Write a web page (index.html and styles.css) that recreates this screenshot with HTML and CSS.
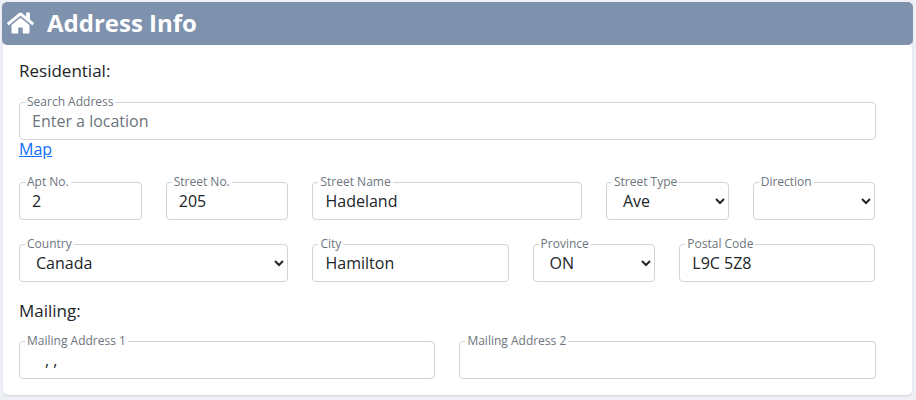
FILE: index.html
```html
<!DOCTYPE html>
<html lang="en">
<head>
<meta charset="utf-8">
<title>Address Info</title>
<link rel="stylesheet" href="styles.css">
</head>
<body>
<section class="panel">
  <header class="panel-head">
    <svg class="home-icon" viewBox="0 0 576 512" aria-hidden="true"><path fill="currentColor" d="M280.37 148.26L96 300.11V464a16 16 0 0 0 16 16l112.06-.29a16 16 0 0 0 15.92-16V368a16 16 0 0 1 16-16h64a16 16 0 0 1 16 16v95.64a16 16 0 0 0 16 16.05L464 480a16 16 0 0 0 16-16V300L295.67 148.26a12.19 12.19 0 0 0-15.3 0zM571.6 251.47L488 182.56V44.05a12 12 0 0 0-12-12h-56a12 12 0 0 0-12 12v72.61L318.47 43a48 48 0 0 0-61 0L4.34 251.47a12 12 0 0 0-1.6 16.9l25.5 31A12 12 0 0 0 45.15 301l235.22-193.74a12.19 12.19 0 0 1 15.3 0L530.9 301a12 12 0 0 0 16.9-1.6l25.5-31a12 12 0 0 0-1.7-16.93z"/></svg>
    <h1 class="panel-title">Address Info</h1>
  </header>
  <div class="panel-body">
    <p class="section-label">Residential:</p>
    <div class="field search-field">
      <span class="field-label">Search Address</span>
      <input class="control" type="text" placeholder="Enter a location">
    </div>
    <a class="map-link" href="#">Map</a>
    <div class="form-grid row-one">
      <div class="field span-2"><span class="field-label">Apt No.</span><input class="control" type="text" value="2"></div>
      <div class="field span-2"><span class="field-label">Street No.</span><input class="control" type="text" value="205"></div>
      <div class="field span-4"><span class="field-label">Street Name</span><input class="control" type="text" value="Hadeland"></div>
      <div class="field span-2"><span class="field-label">Street Type</span><select class="control"><option>Ave</option></select></div>
      <div class="field span-2"><span class="field-label">Direction</span><select class="control"><option></option></select></div>
    </div>
    <div class="form-grid row-two">
      <div class="field span-4"><span class="field-label">Country</span><select class="control"><option>Canada</option></select></div>
      <div class="field span-3"><span class="field-label">City</span><input class="control" type="text" value="Hamilton"></div>
      <div class="field span-2"><span class="field-label">Province</span><select class="control"><option>ON</option></select></div>
      <div class="field span-3"><span class="field-label">Postal Code</span><input class="control" type="text" value="L9C 5Z8"></div>
    </div>
    <p class="section-label mailing-label">Mailing:</p>
    <div class="form-grid mailing-grid">
      <div class="field span-6"><span class="field-label">Mailing Address 1</span><input class="control indented" type="text" value=", ,"></div>
      <div class="field span-6"><span class="field-label">Mailing Address 2</span><input class="control" type="text"></div>
    </div>
  </div>
</section>
</body>
</html>
```

FILE: styles.css
```css
* { box-sizing: border-box; }

html, body { height: 100%; }

body {
  margin: 0;
  padding: 2px 3px 0;
  background: #eef0f5;
  color: #212529;
  font-family: "Open Sans", "Liberation Sans", sans-serif;
  font-size: 16px;
  overflow: hidden;
}

.panel {
  width: 909px;
  height: 393px;
  background: #fff;
  border-radius: 0 0 5px 5px;
  box-shadow: 0 1px 2px rgba(60, 70, 90, 0.18);
}

.panel-head {
  display: flex;
  align-items: center;
  gap: 13px;
  height: 43px;
  margin: 0 -1px;
  padding-left: 5px;
  padding-bottom: 2px;
  background: #7f92ad;
  color: #fff;
  border-radius: 5px;
}

.home-icon { width: 27px; height: 24px; }

.panel-title {
  margin: 0;
  font-size: 24px;
  font-weight: 700;
  line-height: 30px;
}

.panel-body { padding: 14px 36px 0 16px; }

.section-label {
  margin: 0;
  height: 24px;
  line-height: 24px;
  font-size: 17px;
  color: #212529;
}

.field { position: relative; height: 38px; }

.search-field { margin-top: 19px; }

.field-label {
  position: absolute;
  top: -8px;
  left: 6px;
  padding: 0 2px;
  background: #fff;
  color: #6c757d;
  font-size: 12px;
  line-height: 15px;
  white-space: nowrap;
}

.control {
  display: block;
  width: 100%;
  height: 38px;
  padding: 6px 12px;
  background: #fff;
  border: 1px solid #ced4da;
  border-radius: 4px;
  color: #212529;
  font-family: inherit;
  font-size: 16px;
}

.control::placeholder { color: #6c757d; opacity: 1; }

.indented { padding-left: 25px; }

.map-link {
  display: block;
  width: max-content;
  height: 20px;
  margin-top: -1px;
  line-height: 20px;
  color: #0d6efd;
  font-size: 16px;
  text-decoration: underline;
}

.form-grid {
  display: grid;
  grid-template-columns: repeat(12, 1fr);
  column-gap: 24px;
  margin-right: 0.6px;
}

.mailing-grid { margin-right: 0.2px; }

.row-one { margin-top: 23px; }
.row-two { margin-top: 24px; }
.mailing-label { margin-top: 17px; margin-bottom: 18px; }

.span-2 { grid-column: span 2; }
.span-3 { grid-column: span 3; }
.span-4 { grid-column: span 4; }
.span-6 { grid-column: span 6; }
```
